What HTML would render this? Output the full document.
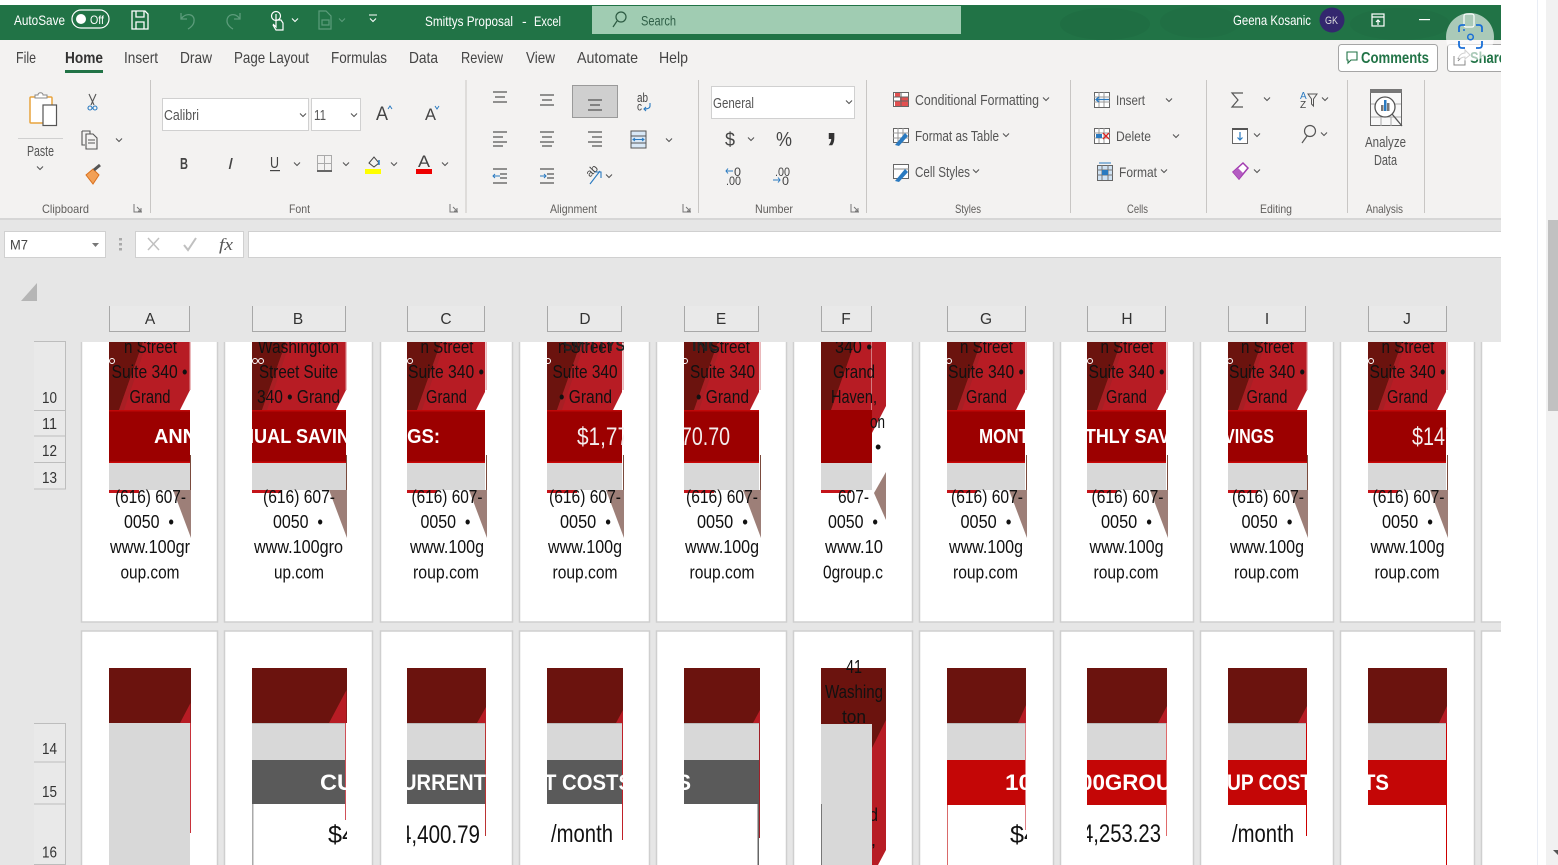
<!DOCTYPE html>
<html lang="en"><head><meta charset="utf-8"><title>Smittys Proposal - Excel</title>
<style>
html,body{margin:0;padding:0;width:1558px;height:865px;overflow:hidden;background:#fff}
svg{display:block}
text{font-family:"Liberation Sans",sans-serif;white-space:pre}
.w{fill:#fff;font-size:14px}
.tab{fill:#444;font-size:16px}
.g{fill:#605e5c;font-size:12px}
.r{fill:#555;font-size:14.5px}
.h{fill:#333;font-size:15.5px}
.c{fill:#111;font-size:18px}
.b{fill:#fff;font-size:20px;font-weight:bold}
.n{fill:#f4eeee;font-size:25px}
.k{fill:#111;font-size:25px}
.m{fill:#fff;font-size:22px;font-weight:bold}
.ic{fill:none;stroke:#666;stroke-width:1.2}
</style></head><body>
<svg xmlns="http://www.w3.org/2000/svg" width="1558" height="865" viewBox="0 0 1558 865">
<defs>
<path id="cv" d="M-3,-1.5 L0,1.5 L3,-1.5" fill="none" stroke="#555" stroke-width="1.1"/>
<path id="cw" d="M-3,-1.5 L0,1.5 L3,-1.5" fill="none" stroke="#fff" stroke-width="1.1"/>
<g id="bg">
<rect x="0" y="342" width="1" height="68" fill="#b71c24"/>
<rect x="0" y="410" width="1" height="53" fill="#9c0000"/>
<rect x="0" y="410" width="1" height="1.5" fill="#c00808"/>
<rect x="0" y="461.5" width="1" height="1.5" fill="#c80808"/>
<rect x="0" y="463" width="1" height="27" fill="#d8d8d8"/>
</g>
<g id="L">
<polygon points="0,342 34,342 10,410 0,410" fill="#6b130e"/>
<polygon points="34,342 38,342 15,410 10,410" fill="#a81f24"/>
<rect x="0" y="490" width="30" height="3" fill="#c4141a"/>
</g>
<g id="R">
<rect x="-0.5" y="342" width="1.2" height="48" fill="#e29a9e"/>
<polygon points="-10,410 0,390 0.8,390 0.8,410" fill="#fff"/>
<rect x="0" y="455" width="1.2" height="35" fill="#7a4a3c"/>
<polygon points="-17,490 1,490 1,538" fill="#9d7f78"/>
</g>
<g id="bg2">
<rect x="0" y="723" width="1" height="37" fill="#d8d8d8"/>
<rect x="0" y="723" width="1" height="1" fill="#bbb"/>
</g>
</defs>

<rect x="0" y="0" width="1558" height="865" fill="#fff"/>
<rect x="1537" y="0" width="1" height="865" fill="#e9edf5"/>
<rect x="1546" y="0" width="12" height="865" fill="#f1f1f1"/>
<rect x="1548" y="220" width="10" height="191" fill="#c1c1c1"/>
<polygon points="1553,850 1558,850 1558,855" fill="#555"/>

<!-- title bar -->
<rect x="0" y="5" width="1501" height="35" fill="#217346"/>
<ellipse cx="1105" cy="24" rx="45" ry="16" fill="#1f6e43"/>
<ellipse cx="1200" cy="22" rx="40" ry="16" fill="#206f44"/>
<ellipse cx="1400" cy="24" rx="50" ry="16" fill="#206f44"/>
<text class="w" x="14" y="25" textLength="51" lengthAdjust="spacingAndGlyphs">AutoSave</text>
<rect x="72" y="10" width="37" height="18" rx="9" fill="none" stroke="#fff" stroke-width="1.2"/>
<circle cx="81" cy="19" r="5" fill="#fff"/>
<text class="w" x="90" y="24" style="font-size:12px" textLength="14" lengthAdjust="spacingAndGlyphs">Off</text>
<g fill="none" stroke="#fff" stroke-width="1.3"><path d="M132,11H145L148,14V29H132Z"/><path d="M136,11V17H144V11M136,29V22H144V29"/></g>
<g fill="none" stroke="#5c9c7b" stroke-width="1.3"><path d="M181,13V19H187M181,19C186,12 195,14 194,21C194,25 190,28 188,29"/><path d="M240,13V19H234M240,19C235,12 227,14 227,21C227,25 231,28 233,29"/></g>
<g fill="none" stroke="#fff" stroke-width="1.2"><circle cx="276" cy="16" r="4.5"/><path d="M276,14V27L273,24M276,20H281L283,23V30H276L273,25"/></g>
<use href="#cw" x="295" y="20"/>
<g fill="none" stroke="#5c9c7b" stroke-width="1.2"><path d="M319,11H326L331,16V29H319Z M322,20H329V25H322Z"/></g>
<path d="M339,18.500 L342,21.500 L345,18.500" fill="none" stroke="#5c9c7b"/>
<path d="M369,15H377M370,18.500L373,21.500L376,18.500" fill="none" stroke="#fff" stroke-width="1.1"/>
<text class="w" x="425" y="26" textLength="88" lengthAdjust="spacingAndGlyphs">Smittys Proposal</text>
<text class="w" x="522" y="26">-</text>
<text class="w" x="534" y="26" textLength="27" lengthAdjust="spacingAndGlyphs">Excel</text>
<rect x="592" y="6" width="369" height="28" fill="#a0ccb2"/>
<circle cx="621" cy="17" r="5" fill="none" stroke="#2c5a42" stroke-width="1.2"/><path d="M617,21L613,27" stroke="#2c5a42" stroke-width="1.2"/>
<text x="641" y="25.500" style="font-size:14px;fill:#2f5f47" textLength="35" lengthAdjust="spacingAndGlyphs">Search</text>
<text class="w" x="1233" y="25" textLength="78" lengthAdjust="spacingAndGlyphs">Geena Kosanic</text>
<circle cx="1332" cy="20" r="12.500" fill="#33276e"/>
<text x="1325" y="24" style="font-size:11px;fill:#ddd" textLength="13" lengthAdjust="spacingAndGlyphs">GK</text>
<g fill="none" stroke="#fff" stroke-width="1.2"><rect x="1372" y="14" width="12" height="12"/><path d="M1372,17H1384M1378,25V20M1376,22L1378,20L1380,22"/></g>
<rect x="1419" y="19" width="11" height="1.200" fill="#fff"/>

<!-- ribbon -->
<rect x="0" y="40" width="1501" height="178" fill="#f3f2f1"/>
<rect x="0" y="218" width="1501" height="2" fill="#d6d6d6"/>
<text class="tab" x="16" y="63" textLength="20" lengthAdjust="spacingAndGlyphs">File</text>
<text class="tab" x="65" y="63" textLength="38" lengthAdjust="spacingAndGlyphs" style="font-weight:bold;fill:#333">Home</text>
<rect x="65" y="70" width="38" height="3" fill="#217346"/>
<text class="tab" x="124" y="63" textLength="34" lengthAdjust="spacingAndGlyphs">Insert</text>
<text class="tab" x="180" y="63" textLength="32" lengthAdjust="spacingAndGlyphs">Draw</text>
<text class="tab" x="234" y="63" textLength="75" lengthAdjust="spacingAndGlyphs">Page Layout</text>
<text class="tab" x="331" y="63" textLength="56" lengthAdjust="spacingAndGlyphs">Formulas</text>
<text class="tab" x="409" y="63" textLength="29" lengthAdjust="spacingAndGlyphs">Data</text>
<text class="tab" x="461" y="63" textLength="42" lengthAdjust="spacingAndGlyphs">Review</text>
<text class="tab" x="526" y="63" textLength="29" lengthAdjust="spacingAndGlyphs">View</text>
<text class="tab" x="577" y="63" textLength="61" lengthAdjust="spacingAndGlyphs">Automate</text>
<text class="tab" x="659" y="63" textLength="29" lengthAdjust="spacingAndGlyphs">Help</text>

<rect x="1338.500" y="44.500" width="99" height="27" rx="3" fill="#fff" stroke="#a5a5a5"/>
<path d="M1347,52H1357V60H1351L1348,63V60H1347Z" fill="none" stroke="#217346" stroke-width="1.100"/>
<text x="1361" y="63" style="font-size:15.500px;font-weight:bold;fill:#217346" textLength="68" lengthAdjust="spacingAndGlyphs">Comments</text>
<rect x="1447.500" y="44.500" width="60" height="27" rx="3" fill="#fff" stroke="#a5a5a5"/>
<path d="M1454,56V65H1465V59M1458,59C1459,55 1462,53 1465,53V50L1470,55L1465,59V57C1462,57 1460,58 1458,61" fill="none" stroke="#888" stroke-width="1"/>
<text x="1470" y="63" style="font-size:15.500px;font-weight:bold;fill:#217346" textLength="36" lengthAdjust="spacingAndGlyphs">Share</text>

<!-- separators -->
<g fill="#c8c6c4"><rect x="150" y="80" width="1" height="133"/><rect x="465.500" y="80" width="1" height="133"/><rect x="698" y="80" width="1" height="133"/><rect x="866" y="80" width="1" height="133"/><rect x="1070" y="80" width="1" height="133"/><rect x="1206" y="80" width="1" height="133"/><rect x="1347" y="80" width="1" height="133"/><rect x="1424" y="80" width="1" height="133"/></g>

<!-- clipboard -->
<rect x="30" y="97" width="22" height="26" rx="1" fill="#fff" stroke="#e8a33d" stroke-width="1.500"/>
<path d="M35,98V95H38C38,92 43,92 43,95H47V98Z" fill="#fff" stroke="#888"/>
<rect x="43" y="105" width="13.500" height="20.500" fill="#fff" stroke="#555" stroke-width="1.200"/>
<rect x="18" y="138" width="45" height="1" fill="#d0d0d0"/>
<text class="r" x="27" y="156" textLength="27" lengthAdjust="spacingAndGlyphs">Paste</text>
<use href="#cv" x="40" y="168"/>
<g fill="none" stroke="#555" stroke-width="1.100"><path d="M89,94L94,105M96,94L91,105"/><circle cx="90" cy="108" r="2" stroke="#2a7ac0"/><circle cx="95" cy="108" r="2" stroke="#2a7ac0"/></g>
<path d="M82,131H90V134M82,131V145H85M86,134H93L97,138V149H86Z M88,140H95M88,143H95" fill="none" stroke="#555" stroke-width="1.100"/>
<use href="#cv" x="119" y="140"/>
<path d="M86,175L93,169L99,175L93,184Z" fill="#f2a056" stroke="#d9701e"/><path d="M94,170L100,165" stroke="#555" stroke-width="3"/>
<text class="g" x="42" y="213" textLength="47" lengthAdjust="spacingAndGlyphs">Clipboard</text>
<path d="M134,204V212H142M137,207L141,211M141,208V211H138" fill="none" stroke="#777"/>

<!-- font -->
<rect x="162.500" y="98.500" width="146" height="32" fill="#fff" stroke="#d0d0d0"/>
<text class="r" x="164" y="120" textLength="35" lengthAdjust="spacingAndGlyphs">Calibri</text>
<use href="#cv" x="303" y="115"/>
<rect x="311.500" y="98.500" width="49" height="32" fill="#fff" stroke="#d0d0d0"/>
<text class="r" x="314" y="120" textLength="12" lengthAdjust="spacingAndGlyphs">11</text>
<use href="#cv" x="354" y="115"/>
<text x="376" y="120" style="font-size:19px;fill:#444" textLength="12" lengthAdjust="spacingAndGlyphs">A</text>
<path d="M388,109L390,106L392,109" fill="none" stroke="#2a7ac0"/>
<text x="425" y="120" style="font-size:17px;fill:#444" textLength="11" lengthAdjust="spacingAndGlyphs">A</text>
<path d="M435,106L437,109L439,106" fill="none" stroke="#2a7ac0"/>
<text x="180" y="169" style="font-size:16px;font-weight:bold;fill:#444" textLength="8" lengthAdjust="spacingAndGlyphs">B</text>
<text x="228" y="169" style="font-size:16px;font-style:italic;fill:#444" textLength="5" lengthAdjust="spacingAndGlyphs">I</text>
<text x="270" y="168" style="font-size:16px;fill:#444" textLength="9" lengthAdjust="spacingAndGlyphs">U</text>
<rect x="270" y="170" width="10" height="1.200" fill="#444"/>
<use href="#cv" x="297" y="164"/>
<path d="M317.500,155.500H331.500V171.500H317.500ZM324.500,155.500V171.500M317.500,163.500H331.500" fill="none" stroke="#aaa"/><rect x="317" y="170" width="15" height="2" fill="#666"/>
<use href="#cv" x="346" y="164"/>
<path d="M369,163L374,157L379,163L374,167Z" fill="none" stroke="#444"/><path d="M379,160V165" stroke="#2a7ac0" stroke-width="1.500"/><rect x="365" y="169" width="16" height="5" fill="#ff0"/>
<use href="#cv" x="394" y="164"/>
<text x="418" y="167" style="font-size:17px;fill:#444" textLength="12" lengthAdjust="spacingAndGlyphs">A</text>
<rect x="416" y="169" width="16" height="5" fill="#e00"/>
<use href="#cv" x="445" y="164"/>
<text class="g" x="289" y="213" textLength="21" lengthAdjust="spacingAndGlyphs">Font</text>
<path d="M450,204V212H458M453,207L457,211M457,208V211H454" fill="none" stroke="#777"/>

<!-- alignment -->
<rect x="572.500" y="85.500" width="45" height="32" fill="#cfcfcf" stroke="#9a9a9a"/>
<g stroke="#555" stroke-width="1.200" fill="none">
<path d="M493,92H507M495,97H505M493,102H507"/>
<path d="M540,95H554M542,100H552M540,105H554"/>
<path d="M588,100H602M590,105H600M588,110H602"/>
<path d="M493,132H507M493,137H503M493,142H507M493,146H503"/>
<path d="M540,132H554M542,137H552M540,142H554M542,146H552"/>
<path d="M588,132H602M592,137H602M588,142H602M592,146H602"/>
<path d="M493,169H507M500,174H507M500,178H507M493,183H507"/>
<path d="M540,169H554M547,174H554M547,178H554M540,183H554"/>
</g>
<path d="M500,176H493M495,174L493,176L495,178" fill="none" stroke="#2a7ac0"/>
<path d="M540,176H546M544,174L546,176L544,178" fill="none" stroke="#2a7ac0"/>
<text x="637" y="102" style="font-size:13px;fill:#444" textLength="11" lengthAdjust="spacingAndGlyphs">ab</text>
<text x="637" y="110.500" style="font-size:12px;fill:#444" textLength="5" lengthAdjust="spacingAndGlyphs">c</text>
<path d="M650,103V106C650,108 648,109 644,109M646,107L644,109L646,111" fill="none" stroke="#2a7ac0" stroke-width="1.100"/>
<rect x="631" y="131" width="15" height="17" fill="#d8e8f6" stroke="#555"/><path d="M631,136H646M631,143H646" stroke="#555"/><path d="M633,139.500H644M635,138L633,139.500L635,141M642,138L644,139.500L642,141" fill="none" stroke="#2a7ac0"/>
<use href="#cv" x="669" y="140"/>
<text x="586" y="176" style="font-size:11px;fill:#444" transform="rotate(-45 590 172)">ab</text>
<path d="M590,184L600,171M595,172H601V178" fill="none" stroke="#2a7ac0" stroke-width="1.100"/>
<use href="#cv" x="609" y="176"/>
<text class="g" x="550" y="213" textLength="47" lengthAdjust="spacingAndGlyphs">Alignment</text>
<path d="M683,204V212H691M686,207L690,211M690,208V211H687" fill="none" stroke="#777"/>

<!-- number -->
<rect x="711.500" y="86.500" width="143" height="32" fill="#fff" stroke="#d0d0d0"/>
<text class="r" x="713" y="108" textLength="41" lengthAdjust="spacingAndGlyphs">General</text>
<use href="#cv" x="849" y="102"/>
<text x="725" y="146" style="font-size:19px;fill:#444" textLength="10" lengthAdjust="spacingAndGlyphs">$</text>
<use href="#cv" x="751" y="139"/>
<text x="776" y="146" style="font-size:20px;fill:#444" textLength="16" lengthAdjust="spacingAndGlyphs">%</text>
<text x="826" y="139" style="font-size:40px;font-weight:bold;fill:#333" textLength="11" lengthAdjust="spacingAndGlyphs">,</text>
<text x="734" y="176" style="font-size:12px;fill:#444" textLength="7" lengthAdjust="spacingAndGlyphs">0</text>
<text x="726" y="185" style="font-size:12px;fill:#444" textLength="15" lengthAdjust="spacingAndGlyphs">.00</text>
<path d="M726,171H733M728,168.500L726,171L728,173.500" fill="none" stroke="#2a7ac0"/>
<text x="775" y="176" style="font-size:12px;fill:#444" textLength="15" lengthAdjust="spacingAndGlyphs">.00</text>
<text x="782" y="185" style="font-size:12px;fill:#444" textLength="7" lengthAdjust="spacingAndGlyphs">0</text>
<path d="M773,180H780M778,177.500L780,180L778,182.500" fill="none" stroke="#2a7ac0"/>
<text class="g" x="755" y="213" textLength="38" lengthAdjust="spacingAndGlyphs">Number</text>
<path d="M851,204V212H859M854,207L858,211M858,208V211H855" fill="none" stroke="#777"/>

<!-- styles -->
<rect x="893.500" y="92.500" width="15" height="14" fill="#fff" stroke="#666"/><rect x="895" y="93" width="5" height="4" fill="#e25050"/><rect x="900" y="97" width="8" height="4" fill="#e25050"/><rect x="895" y="101" width="13" height="5" fill="#e25050"/><path d="M893,97H909M893,101H909M901,92V107" stroke="#666"/>
<text class="r" x="915" y="105" textLength="124" lengthAdjust="spacingAndGlyphs">Conditional Formatting</text>
<use href="#cv" x="1046" y="99"/>
<rect x="893.500" y="128.500" width="15" height="14" fill="#fff" stroke="#666"/><path d="M893,133H909M893,138H909M898,128V143M903,128V143" stroke="#999"/><path d="M895,145L905,133L908,136L899,146Z" fill="#2a7ac0"/>
<text class="r" x="915" y="141" textLength="84" lengthAdjust="spacingAndGlyphs">Format as Table</text>
<use href="#cv" x="1006" y="135"/>
<rect x="893.500" y="164.500" width="15" height="14" fill="#fff" stroke="#666"/><path d="M893,169H909" stroke="#888"/><path d="M895,181L905,169L908,172L899,182Z" fill="#2a7ac0"/>
<text class="r" x="915" y="177" textLength="55" lengthAdjust="spacingAndGlyphs">Cell Styles</text>
<use href="#cv" x="976" y="171"/>
<text class="g" x="955" y="213" textLength="26" lengthAdjust="spacingAndGlyphs">Styles</text>

<!-- cells -->
<rect x="1094.500" y="92.500" width="15" height="15" fill="#fff" stroke="#666"/><path d="M1094,97H1110M1094,102H1110M1099,92V107M1104,92V107" stroke="#999"/><path d="M1109,99.500H1096M1099,97L1096,99.500L1099,102" fill="none" stroke="#2a7ac0" stroke-width="1.300"/>
<text x="1116" y="105" style="font-size:14px;fill:#555" textLength="29" lengthAdjust="spacingAndGlyphs">Insert</text>
<use href="#cv" x="1169" y="100"/>
<rect x="1094.500" y="128.500" width="15" height="15" fill="#fff" stroke="#666"/><path d="M1094,133H1110M1094,138H1110M1099,128V143M1104,128V143" stroke="#999"/><path d="M1103,133L1109,139M1109,133L1103,139" stroke="#d22" stroke-width="1.300"/><rect x="1096" y="134" width="6" height="4" fill="#2a7ac0"/>
<text x="1116" y="141" style="font-size:14px;fill:#555" textLength="35" lengthAdjust="spacingAndGlyphs">Delete</text>
<use href="#cv" x="1176" y="136"/>
<rect x="1097.500" y="165.500" width="15" height="15" fill="#cfe2f3" stroke="#666"/><path d="M1097,170H1113M1097,175H1113M1102,165V180M1108,165V180" stroke="#777"/><rect x="1102" y="170" width="6" height="5" fill="#2a7ac0"/><path d="M1099,163H1111" stroke="#2a7ac0"/>
<text x="1119" y="177" style="font-size:14px;fill:#555" textLength="38" lengthAdjust="spacingAndGlyphs">Format</text>
<use href="#cv" x="1164" y="171"/>
<text class="g" x="1127" y="213" textLength="21" lengthAdjust="spacingAndGlyphs">Cells</text>

<!-- editing -->
<path d="M1243,93H1232L1238,100L1232,107H1243" fill="none" stroke="#555" stroke-width="1.200"/>
<use href="#cv" x="1267" y="99"/>
<text x="1300" y="99" style="font-size:10px;fill:#2a7ac0">A</text>
<text x="1300" y="108" style="font-size:10px;fill:#444">Z</text>
<path d="M1308,94H1317L1313.500,99V106L1311.500,104V99Z" fill="none" stroke="#555"/>
<use href="#cv" x="1325" y="99"/>
<rect x="1232.500" y="128.500" width="15" height="15" fill="#fff" stroke="#666"/><rect x="1232" y="128" width="16" height="2" fill="#555"/><path d="M1240,132V140M1237.500,137.500L1240,140L1242.500,137.500" fill="none" stroke="#2a7ac0" stroke-width="1.200"/>
<use href="#cv" x="1257" y="135"/>
<circle cx="1310" cy="131" r="5.500" fill="none" stroke="#555" stroke-width="1.200"/><path d="M1307,136L1302,143" stroke="#555" stroke-width="1.200"/>
<use href="#cv" x="1324" y="134"/>
<path d="M1233,172L1243,163L1248,168L1239,179Z" fill="#fff" stroke="#a23cb0" stroke-width="1.500"/><path d="M1233,172L1238,168L1243,173L1239,179Z" fill="#b45cc2"/>
<use href="#cv" x="1257" y="171"/>
<text class="g" x="1260" y="213" textLength="32" lengthAdjust="spacingAndGlyphs">Editing</text>

<!-- analyze -->
<rect x="1370.500" y="89.500" width="31" height="36" fill="#f8f8f8" stroke="#666"/><rect x="1370" y="89" width="32" height="4" fill="#777"/>
<path d="M1371,104H1401M1371,117H1401M1381,117V126M1391,117V126" stroke="#aaa"/>
<circle cx="1385" cy="107" r="10" fill="#fff" stroke="#555" stroke-width="1.300"/>
<rect x="1381" y="105" width="2.500" height="6" fill="#777"/><rect x="1384" y="100" width="2.500" height="11" fill="#2a7ac0"/><rect x="1387" y="103" width="2.500" height="8" fill="#777"/>
<path d="M1392,114L1402,126" stroke="#555" stroke-width="1.300"/>
<text class="r" x="1365" y="147" textLength="41" lengthAdjust="spacingAndGlyphs">Analyze</text>
<text class="r" x="1374" y="165" textLength="23" lengthAdjust="spacingAndGlyphs">Data</text>
<text class="g" x="1366" y="213" textLength="37" lengthAdjust="spacingAndGlyphs">Analysis</text>

<!-- sheet background -->
<rect x="0" y="220" width="1501" height="645" fill="#e6e6e6"/>
<rect x="4.500" y="231.500" width="101" height="26" fill="#fff" stroke="#d0d0d0"/>
<text x="10" y="249.500" style="font-size:14px;fill:#444" textLength="18" lengthAdjust="spacingAndGlyphs">M7</text>
<polygon points="92,243 99,243 95.500,247" fill="#777"/>
<g fill="#aaa"><rect x="119" y="238" width="3" height="2.500"/><rect x="119" y="243" width="3" height="2.500"/><rect x="119" y="248" width="3" height="2.500"/></g>
<rect x="135.500" y="231.500" width="108" height="26" fill="#fff" stroke="#d0d0d0"/>
<path d="M148,238L159,250M159,238L148,250" stroke="#c0c0c0" stroke-width="1.500"/>
<path d="M184,245L188,250L196,238" fill="none" stroke="#c0c0c0" stroke-width="2"/>
<text x="219" y="250" style="font-family:'Liberation Serif',serif;font-style:italic;font-size:17px;fill:#555" textLength="14" lengthAdjust="spacingAndGlyphs">fx</text>
<rect x="248.500" y="231.500" width="1260" height="26" fill="#fff" stroke="#d0d0d0"/>
<rect x="1501" y="220" width="36" height="40" fill="#fff"/>
<polygon points="37,283 37,301 21,301" fill="#b5b5b5"/>

<!-- cards -->
<g fill="#fff" stroke="#cfcfcf" stroke-width="1.500">
<rect x="81.500" y="335" width="136" height="287"/><rect x="224.500" y="335" width="148" height="287"/><rect x="380.500" y="335" width="132" height="287"/><rect x="519.500" y="335" width="130" height="287"/><rect x="656.500" y="335" width="130" height="287"/><rect x="793.500" y="335" width="119" height="287"/><rect x="919.500" y="335" width="134" height="287"/><rect x="1060.500" y="335" width="133" height="287"/><rect x="1200.500" y="335" width="133" height="287"/><rect x="1340.500" y="335" width="134" height="287"/><rect x="1481.500" y="335" width="30" height="287"/>
<rect x="81.500" y="631" width="136" height="240"/><rect x="224.500" y="631" width="148" height="240"/><rect x="380.500" y="631" width="132" height="240"/><rect x="519.500" y="631" width="130" height="240"/><rect x="656.500" y="631" width="130" height="240"/><rect x="793.500" y="631" width="119" height="240"/><rect x="919.500" y="631" width="134" height="240"/><rect x="1060.500" y="631" width="133" height="240"/><rect x="1200.500" y="631" width="133" height="240"/><rect x="1340.500" y="631" width="134" height="240"/><rect x="1481.500" y="631" width="30" height="240"/>
</g>
<!-- cover above row 1 cards -->
<rect x="66" y="332" width="1435" height="10" fill="#e6e6e6"/>
<rect x="1501" y="330" width="36" height="535" fill="#fff"/>

<!-- column headers -->
<g fill="#e9e9e9" stroke="#a8a8a8">
<path d="M109.500,306V331.500H189.500V306"/><path d="M252.500,306V331.500H345.500V306"/><path d="M407.500,306V331.500H484.500V306"/><path d="M547.500,306V331.500H621.500V306"/><path d="M684.500,306V331.500H758.500V306"/><path d="M821.500,306V331.500H871.500V306"/><path d="M947.500,306V331.500H1025.500V306"/><path d="M1087.500,306V331.500H1165.500V306"/><path d="M1228.500,306V331.500H1305.500V306"/><path d="M1368.500,306V331.500H1446.500V306"/>
</g>
<g>
<text class="h" x="150" y="324" text-anchor="middle">A</text><text class="h" x="298" y="324" text-anchor="middle">B</text><text class="h" x="446" y="324" text-anchor="middle">C</text><text class="h" x="585" y="324" text-anchor="middle">D</text><text class="h" x="721" y="324" text-anchor="middle">E</text><text class="h" x="846" y="324" text-anchor="middle">F</text><text class="h" x="986" y="324" text-anchor="middle">G</text><text class="h" x="1127" y="324" text-anchor="middle">H</text><text class="h" x="1267" y="324" text-anchor="middle">I</text><text class="h" x="1407" y="324" text-anchor="middle">J</text>
</g>

<!-- row headers -->
<path d="M34,341.500H65.500V489H34M34,410.500H65.500M34,436H65.500M34,462.500H65.500" fill="#e9e9e9" stroke="#bdbdbd"/>
<path d="M34,723.500H65.500V864.500H34M34,762H65.500M34,804H65.500" fill="#e9e9e9" stroke="#bdbdbd"/>
<text class="h" x="42" y="403" textLength="15" lengthAdjust="spacingAndGlyphs">10</text>
<text class="h" x="42" y="429" textLength="15" lengthAdjust="spacingAndGlyphs">11</text>
<text class="h" x="42" y="456" textLength="15" lengthAdjust="spacingAndGlyphs">12</text>
<text class="h" x="42" y="483" textLength="15" lengthAdjust="spacingAndGlyphs">13</text>
<text class="h" x="42" y="754" textLength="15" lengthAdjust="spacingAndGlyphs">14</text>
<text class="h" x="42" y="797" textLength="15" lengthAdjust="spacingAndGlyphs">15</text>
<text class="h" x="42" y="857.500" textLength="15" lengthAdjust="spacingAndGlyphs">16</text>

<!-- COLUMN A row 1 -->
<svg x="109" y="342" width="82" height="245" viewBox="109 342 82 245">
<use href="#bg" transform="translate(109,0) scale(81,1)"/><use href="#L" x="109"/><use href="#R" x="190"/>
<circle cx="112" cy="361" r="2.500" fill="none" stroke="#fff"/>
<text class="c" x="124" y="353" textLength="53" lengthAdjust="spacingAndGlyphs">n Street</text>
<text class="c" x="111.500" y="378" textLength="76" lengthAdjust="spacingAndGlyphs">Suite 340 •</text>
<text class="c" x="129.500" y="403" textLength="41" lengthAdjust="spacingAndGlyphs">Grand</text>
<text class="b" x="154" y="443" textLength="43" lengthAdjust="spacingAndGlyphs">ANN</text>
<text class="c" x="115" y="503" textLength="71" lengthAdjust="spacingAndGlyphs">(616) 607-</text>
<text class="c" x="124" y="528" textLength="50" lengthAdjust="spacingAndGlyphs">0050  •</text>
<text class="c" x="110" y="553" textLength="80" lengthAdjust="spacingAndGlyphs">www.100gr</text>
<text class="c" x="120.500" y="578.500" textLength="59" lengthAdjust="spacingAndGlyphs">oup.com</text>
</svg>
<!-- COLUMN B row 1 -->
<svg x="252" y="342" width="95" height="245" viewBox="252 342 95 245">
<use href="#bg" transform="translate(252,0) scale(94,1)"/><use href="#L" x="252"/><use href="#R" x="346"/>
<circle cx="255" cy="361" r="2.500" fill="none" stroke="#fff"/><circle cx="261" cy="361" r="2.500" fill="none" stroke="#fff"/>
<text class="c" x="258" y="353" textLength="81" lengthAdjust="spacingAndGlyphs">Washington</text>
<text class="c" x="259" y="378" textLength="79" lengthAdjust="spacingAndGlyphs">Street Suite</text>
<text class="c" x="257" y="403" textLength="83" lengthAdjust="spacingAndGlyphs">340 • Grand</text>
<text class="b" x="249" y="443" textLength="101" lengthAdjust="spacingAndGlyphs">IUAL SAVIN</text>
<text class="c" x="263" y="503" textLength="72" lengthAdjust="spacingAndGlyphs">(616) 607-</text>
<text class="c" x="273" y="528" textLength="50" lengthAdjust="spacingAndGlyphs">0050  •</text>
<text class="c" x="254" y="553" textLength="89" lengthAdjust="spacingAndGlyphs">www.100gro</text>
<text class="c" x="274" y="578.500" textLength="50" lengthAdjust="spacingAndGlyphs">up.com</text>
</svg>
<!-- COLUMN C row 1 -->
<svg x="407" y="342" width="80" height="245" viewBox="407 342 80 245">
<use href="#bg" transform="translate(407,0) scale(78,1)"/><use href="#L" x="407"/><use href="#R" x="486"/>
<circle cx="410" cy="361" r="2.500" fill="none" stroke="#fff"/>
<text class="c" x="420.500" y="353" textLength="53" lengthAdjust="spacingAndGlyphs">n Street</text>
<text class="c" x="408" y="378" textLength="76" lengthAdjust="spacingAndGlyphs">Suite 340 •</text>
<text class="c" x="426" y="403" textLength="41" lengthAdjust="spacingAndGlyphs">Grand</text>
<text class="b" x="402" y="443" textLength="38" lengthAdjust="spacingAndGlyphs">IGS:</text>
<text class="c" x="411.500" y="503" textLength="71" lengthAdjust="spacingAndGlyphs">(616) 607-</text>
<text class="c" x="420.500" y="528" textLength="50" lengthAdjust="spacingAndGlyphs">0050  •</text>
<text class="c" x="410" y="553" textLength="74" lengthAdjust="spacingAndGlyphs">www.100g</text>
<text class="c" x="413" y="578.500" textLength="66" lengthAdjust="spacingAndGlyphs">roup.com</text>
</svg>
<!-- COLUMN D row 1 -->
<svg x="547" y="342" width="77" height="245" viewBox="547 342 77 245">
<use href="#bg" transform="translate(547,0) scale(75,1)"/><use href="#L" x="547"/><use href="#R" x="623"/>
<circle cx="548" cy="361" r="2.500" fill="none" stroke="#fff"/>
<text class="c" x="558" y="353" textLength="53" lengthAdjust="spacingAndGlyphs">n Street</text>
<text x="563" y="351" style="font-size:17px;font-weight:bold;fill:#222" textLength="62" lengthAdjust="spacingAndGlyphs">SMITTYS</text>
<text class="c" x="552.500" y="378" textLength="65" lengthAdjust="spacingAndGlyphs">Suite 340</text>
<text class="c" x="559" y="403" textLength="53" lengthAdjust="spacingAndGlyphs">• Grand</text>
<text class="n" x="577" y="445" textLength="52" lengthAdjust="spacingAndGlyphs">$1,77</text>
<text class="c" x="549" y="503" textLength="72" lengthAdjust="spacingAndGlyphs">(616) 607-</text>
<text class="c" x="560" y="528" textLength="51" lengthAdjust="spacingAndGlyphs">0050  •</text>
<text class="c" x="548" y="553" textLength="74" lengthAdjust="spacingAndGlyphs">www.100g</text>
<text class="c" x="552.500" y="578.500" textLength="65" lengthAdjust="spacingAndGlyphs">roup.com</text>
</svg>
<!-- COLUMN E row 1 -->
<svg x="684" y="342" width="77" height="245" viewBox="684 342 77 245">
<use href="#bg" transform="translate(684,0) scale(75,1)"/><use href="#L" x="684"/><use href="#R" x="760"/>
<circle cx="685" cy="361" r="2.500" fill="none" stroke="#fff"/>
<text class="c" x="697" y="353" textLength="53" lengthAdjust="spacingAndGlyphs">n Street</text>
<text x="692" y="351" style="font-size:17px;font-weight:bold;fill:#222" textLength="28" lengthAdjust="spacingAndGlyphs">INC</text>
<text class="c" x="690" y="378" textLength="65" lengthAdjust="spacingAndGlyphs">Suite 340</text>
<text class="c" x="696" y="403" textLength="53" lengthAdjust="spacingAndGlyphs">• Grand</text>
<text class="n" x="681" y="445" textLength="49" lengthAdjust="spacingAndGlyphs">70.70</text>
<text class="c" x="686" y="503" textLength="72" lengthAdjust="spacingAndGlyphs">(616) 607-</text>
<text class="c" x="697" y="528" textLength="51" lengthAdjust="spacingAndGlyphs">0050  •</text>
<text class="c" x="685" y="553" textLength="74" lengthAdjust="spacingAndGlyphs">www.100g</text>
<text class="c" x="689.500" y="578.500" textLength="65" lengthAdjust="spacingAndGlyphs">roup.com</text>
</svg>
<!-- COLUMN F row 1 -->
<svg x="821" y="342" width="66" height="245" viewBox="821 342 66 245">
<polygon points="821,342 886,342 886,406 872,433 821,433" fill="#b71c24"/>
<polygon points="821,342 855,342 831,410 821,410" fill="#6b130e"/>
<rect x="871" y="342" width="1" height="68" fill="#d47a7e"/>
<rect x="821" y="410" width="51" height="53" fill="#9c0000"/>
<rect x="821" y="463" width="51" height="27" fill="#d8d8d8"/>
<rect x="821" y="490" width="30" height="3" fill="#c4141a"/>
<polygon points="874,493 886,472 886,520" fill="#9d7f78"/>
<text class="c" x="835" y="353" textLength="37" lengthAdjust="spacingAndGlyphs">340 •</text>
<text class="c" x="833" y="378" textLength="42" lengthAdjust="spacingAndGlyphs">Grand</text>
<text class="c" x="831" y="403" textLength="46" lengthAdjust="spacingAndGlyphs">Haven,</text>
<text class="c" x="870" y="428" textLength="15" lengthAdjust="spacingAndGlyphs">on</text>
<text class="c" x="875" y="453">•</text>
<text class="c" x="838" y="503" textLength="31" lengthAdjust="spacingAndGlyphs">607-</text>
<text class="c" x="828" y="528" textLength="50" lengthAdjust="spacingAndGlyphs">0050  •</text>
<text class="c" x="825" y="553" textLength="58" lengthAdjust="spacingAndGlyphs">www.10</text>
<text class="c" x="823" y="578.500" textLength="60" lengthAdjust="spacingAndGlyphs">0group.c</text>
</svg>
<!-- COLUMN G row 1 -->
<svg x="947" y="342" width="80" height="245" viewBox="947 342 80 245">
<use href="#bg" transform="translate(947,0) scale(78,1)"/><use href="#L" x="947"/><use href="#R" x="1026"/>
<circle cx="949" cy="361" r="2.500" fill="none" stroke="#fff"/>
<text class="c" x="960" y="353" textLength="53" lengthAdjust="spacingAndGlyphs">n Street</text>
<text class="c" x="948" y="378" textLength="76" lengthAdjust="spacingAndGlyphs">Suite 340 •</text>
<text class="c" x="966" y="403" textLength="41" lengthAdjust="spacingAndGlyphs">Grand</text>
<text class="b" x="979" y="443" textLength="50" lengthAdjust="spacingAndGlyphs">MONT</text>
<text class="c" x="951" y="503" textLength="72" lengthAdjust="spacingAndGlyphs">(616) 607-</text>
<text class="c" x="960.500" y="528" textLength="51" lengthAdjust="spacingAndGlyphs">0050  •</text>
<text class="c" x="949" y="553" textLength="74" lengthAdjust="spacingAndGlyphs">www.100g</text>
<text class="c" x="953" y="578.500" textLength="65" lengthAdjust="spacingAndGlyphs">roup.com</text>
</svg>
<!-- COLUMN H row 1 -->
<svg x="1087" y="342" width="81" height="245" viewBox="1087 342 81 245">
<use href="#bg" transform="translate(1087,0) scale(79,1)"/><use href="#L" x="1087"/><use href="#R" x="1167"/>
<circle cx="1090" cy="361" r="2.500" fill="none" stroke="#fff"/>
<text class="c" x="1100.500" y="353" textLength="53" lengthAdjust="spacingAndGlyphs">n Street</text>
<text class="c" x="1088.500" y="378" textLength="76" lengthAdjust="spacingAndGlyphs">Suite 340 •</text>
<text class="c" x="1106" y="403" textLength="41" lengthAdjust="spacingAndGlyphs">Grand</text>
<text class="b" x="1085" y="443" textLength="85" lengthAdjust="spacingAndGlyphs">THLY SAV</text>
<text class="c" x="1091.500" y="503" textLength="72" lengthAdjust="spacingAndGlyphs">(616) 607-</text>
<text class="c" x="1101" y="528" textLength="51" lengthAdjust="spacingAndGlyphs">0050  •</text>
<text class="c" x="1089.500" y="553" textLength="74" lengthAdjust="spacingAndGlyphs">www.100g</text>
<text class="c" x="1093.500" y="578.500" textLength="65" lengthAdjust="spacingAndGlyphs">roup.com</text>
</svg>
<!-- COLUMN I row 1 -->
<svg x="1228" y="342" width="80" height="245" viewBox="1228 342 80 245">
<use href="#bg" transform="translate(1228,0) scale(79,1)"/><use href="#L" x="1228"/><use href="#R" x="1307"/>
<circle cx="1230" cy="361" r="2.500" fill="none" stroke="#fff"/>
<text class="c" x="1241" y="353" textLength="53" lengthAdjust="spacingAndGlyphs">n Street</text>
<text class="c" x="1229" y="378" textLength="76" lengthAdjust="spacingAndGlyphs">Suite 340 •</text>
<text class="c" x="1246.500" y="403" textLength="41" lengthAdjust="spacingAndGlyphs">Grand</text>
<text class="b" x="1224" y="443" textLength="50" lengthAdjust="spacingAndGlyphs">VINGS</text>
<text class="c" x="1232" y="503" textLength="72" lengthAdjust="spacingAndGlyphs">(616) 607-</text>
<text class="c" x="1241.500" y="528" textLength="51" lengthAdjust="spacingAndGlyphs">0050  •</text>
<text class="c" x="1230" y="553" textLength="74" lengthAdjust="spacingAndGlyphs">www.100g</text>
<text class="c" x="1234" y="578.500" textLength="65" lengthAdjust="spacingAndGlyphs">roup.com</text>
</svg>
<!-- COLUMN J row 1 -->
<svg x="1368" y="342" width="80" height="245" viewBox="1368 342 80 245">
<use href="#bg" transform="translate(1368,0) scale(78,1)"/><use href="#L" x="1368"/><use href="#R" x="1447"/>
<circle cx="1371" cy="361" r="2.500" fill="none" stroke="#fff"/>
<text class="c" x="1381.500" y="353" textLength="53" lengthAdjust="spacingAndGlyphs">n Street</text>
<text class="c" x="1369.500" y="378" textLength="76" lengthAdjust="spacingAndGlyphs">Suite 340 •</text>
<text class="c" x="1387" y="403" textLength="41" lengthAdjust="spacingAndGlyphs">Grand</text>
<text class="n" x="1412" y="445" textLength="44" lengthAdjust="spacingAndGlyphs">$147</text>
<text class="c" x="1372.500" y="503" textLength="72" lengthAdjust="spacingAndGlyphs">(616) 607-</text>
<text class="c" x="1382" y="528" textLength="51" lengthAdjust="spacingAndGlyphs">0050  •</text>
<text class="c" x="1370.500" y="553" textLength="74" lengthAdjust="spacingAndGlyphs">www.100g</text>
<text class="c" x="1374.500" y="578.500" textLength="65" lengthAdjust="spacingAndGlyphs">roup.com</text>
</svg>

<!-- ROW 2 -->
<!-- A -->
<rect x="109" y="668" width="82" height="55" fill="#6b130e"/>
<polygon points="180,723 190.500,703 190.500,723" fill="#b71c24"/>
<rect x="109" y="723" width="81" height="142" fill="#d8d8d8"/>
<rect x="190" y="723" width="1" height="110" fill="#c8323a"/>
<!-- B -->
<svg x="252" y="668" width="95" height="197" viewBox="252 668 95 197">
<rect x="252" y="668" width="95" height="55" fill="#6b130e"/>
<polygon points="329,723 346.500,690 346.500,723" fill="#b71c24"/>
<use href="#bg2" transform="translate(252,0) scale(93,1)"/>
<rect x="252" y="760" width="93" height="44" fill="#5a5a5a"/>
<rect x="252" y="804" width="1.500" height="61" fill="#aaa"/>
<rect x="345" y="723" width="1" height="97" fill="#d05058"/>
<text class="m" x="320" y="790" textLength="34" lengthAdjust="spacingAndGlyphs">CU</text>
<text class="k" x="328" y="843" textLength="28" lengthAdjust="spacingAndGlyphs">$4</text>
</svg>
<!-- C -->
<svg x="407" y="668" width="80" height="197" viewBox="407 668 80 197">
<rect x="407" y="668" width="79" height="55" fill="#6b130e"/>
<polygon points="477,723 486,707 486,723" fill="#b71c24"/>
<use href="#bg2" transform="translate(407,0) scale(78,1)"/>
<rect x="407" y="760" width="78" height="44" fill="#5a5a5a"/>
<rect x="485" y="723" width="1" height="113" fill="#b33"/>
<text class="m" x="402" y="790" textLength="84" lengthAdjust="spacingAndGlyphs">URRENT</text>
<text class="k" x="400" y="843" textLength="80" lengthAdjust="spacingAndGlyphs">4,400.79</text>
</svg>
<!-- D -->
<svg x="547" y="668" width="77" height="197" viewBox="547 668 77 197">
<rect x="547" y="668" width="76" height="55" fill="#6b130e"/>
<polygon points="616,723 623,710 623,723" fill="#b71c24"/>
<use href="#bg2" transform="translate(547,0) scale(75,1)"/>
<rect x="547" y="760" width="75" height="44" fill="#5a5a5a"/>
<rect x="622" y="723" width="1" height="117" fill="#c02028"/>
<text class="m" x="544" y="790" textLength="88" lengthAdjust="spacingAndGlyphs">T COSTS</text>
<text class="k" x="551" y="842" textLength="62" lengthAdjust="spacingAndGlyphs">/month</text>
</svg>
<!-- E -->
<svg x="684" y="668" width="77" height="197" viewBox="684 668 77 197">
<rect x="684" y="668" width="76" height="55" fill="#6b130e"/>
<polygon points="753,723 760,710 760,723" fill="#b71c24"/>
<use href="#bg2" transform="translate(684,0) scale(75,1)"/>
<rect x="684" y="760" width="75" height="44" fill="#5a5a5a"/>
<rect x="759" y="723" width="1" height="115" fill="#a02028"/>
<rect x="757.500" y="804" width="1.500" height="61" fill="#666"/>
<text class="m" x="677" y="790" textLength="14" lengthAdjust="spacingAndGlyphs">S</text>
</svg>
<!-- F -->
<rect x="821" y="668" width="65" height="80" fill="#6b130e"/>
<polygon points="886,720 872,748 872,865 878,865 886,850" fill="#b71c24"/>
<text class="c" x="846" y="673" textLength="16" lengthAdjust="spacingAndGlyphs">41</text>
<text class="c" x="825" y="698" textLength="58" lengthAdjust="spacingAndGlyphs">Washing</text>
<text class="c" x="842" y="723" textLength="24" lengthAdjust="spacingAndGlyphs">ton</text>
<text class="c" x="869" y="821" textLength="9" lengthAdjust="spacingAndGlyphs">d</text>
<text class="c" x="871" y="846">,</text>
<rect x="821" y="724" width="51" height="141" fill="#d8d8d8"/>
<rect x="821" y="804" width="1" height="61" fill="#777"/>
<!-- G -->
<svg x="947" y="668" width="80" height="197" viewBox="947 668 80 197">
<rect x="947" y="668" width="79" height="55" fill="#6b130e"/>
<polygon points="1018,723 1026,705 1026,723" fill="#b71c24"/>
<use href="#bg2" transform="translate(947,0) scale(78,1)"/>
<rect x="947" y="760" width="79" height="45" fill="#c40606"/>
<rect x="947" y="805" width="1" height="60" fill="#d96a6a"/>
<rect x="1025" y="723" width="1" height="107" fill="#e08086"/>
<text class="m" x="1005" y="790" textLength="27" lengthAdjust="spacingAndGlyphs">10</text>
<text class="k" x="1010" y="843" textLength="28" lengthAdjust="spacingAndGlyphs">$4</text>
</svg>
<!-- H -->
<svg x="1087" y="668" width="81" height="197" viewBox="1087 668 81 197">
<rect x="1087" y="668" width="80" height="55" fill="#6b130e"/>
<polygon points="1158,723 1167,706 1167,723" fill="#b71c24"/>
<use href="#bg2" transform="translate(1087,0) scale(79,1)"/>
<rect x="1087" y="760" width="79" height="45" fill="#c40606"/>
<rect x="1166" y="723" width="1" height="113" fill="#e06a6a"/>
<text class="m" x="1080" y="790" textLength="92" lengthAdjust="spacingAndGlyphs">00GROU</text>
<text class="k" x="1082" y="842" textLength="79" lengthAdjust="spacingAndGlyphs">4,253.23</text>
</svg>
<!-- I -->
<svg x="1228" y="668" width="80" height="197" viewBox="1228 668 80 197">
<rect x="1228" y="668" width="79" height="55" fill="#6b130e"/>
<polygon points="1298,723 1307,706 1307,723" fill="#b71c24"/>
<use href="#bg2" transform="translate(1228,0) scale(78,1)"/>
<rect x="1228" y="760" width="79" height="45" fill="#c40606"/>
<rect x="1306" y="723" width="1" height="113" fill="#c00"/>
<text class="m" x="1227" y="790" textLength="85" lengthAdjust="spacingAndGlyphs">UP COST</text>
<text class="k" x="1232" y="842" textLength="62" lengthAdjust="spacingAndGlyphs">/month</text>
</svg>
<!-- J -->
<svg x="1368" y="668" width="80" height="197" viewBox="1368 668 80 197">
<rect x="1368" y="668" width="79" height="55" fill="#6b130e"/>
<polygon points="1439,723 1447,706 1447,723" fill="#b71c24"/>
<use href="#bg2" transform="translate(1368,0) scale(78,1)"/>
<rect x="1368" y="760" width="79" height="45" fill="#c40606"/>
<rect x="1446" y="723" width="1" height="142" fill="#c00"/>
<text class="m" x="1363" y="790" textLength="26" lengthAdjust="spacingAndGlyphs">TS</text>
</svg>

<!-- capture overlay -->
<rect x="1464" y="14" width="10" height="13" rx="2" fill="none" stroke="#fff" stroke-width="1.200"/>
<circle cx="1470" cy="37" r="24" fill="#fff" fill-opacity=".62"/>
<rect x="1501" y="0" width="36" height="220" fill="#fff"/>
<rect x="1537" y="0" width="1" height="220" fill="#e9edf5"/>
<path d="M1459,32V28Q1459,25 1462,25H1465M1476,25H1479Q1482,25 1482,28V32M1482,41V45Q1482,48 1479,48H1476M1465,48H1462Q1459,48 1459,45V41" fill="none" stroke="#1a6fd6" stroke-width="1.800"/>
<circle cx="1470.500" cy="37" r="2.800" fill="none" stroke="#1a6fd6" stroke-width="1.500"/>
<circle cx="1464" cy="30" r="1" fill="#1a6fd6"/>
</svg>
</body></html>
